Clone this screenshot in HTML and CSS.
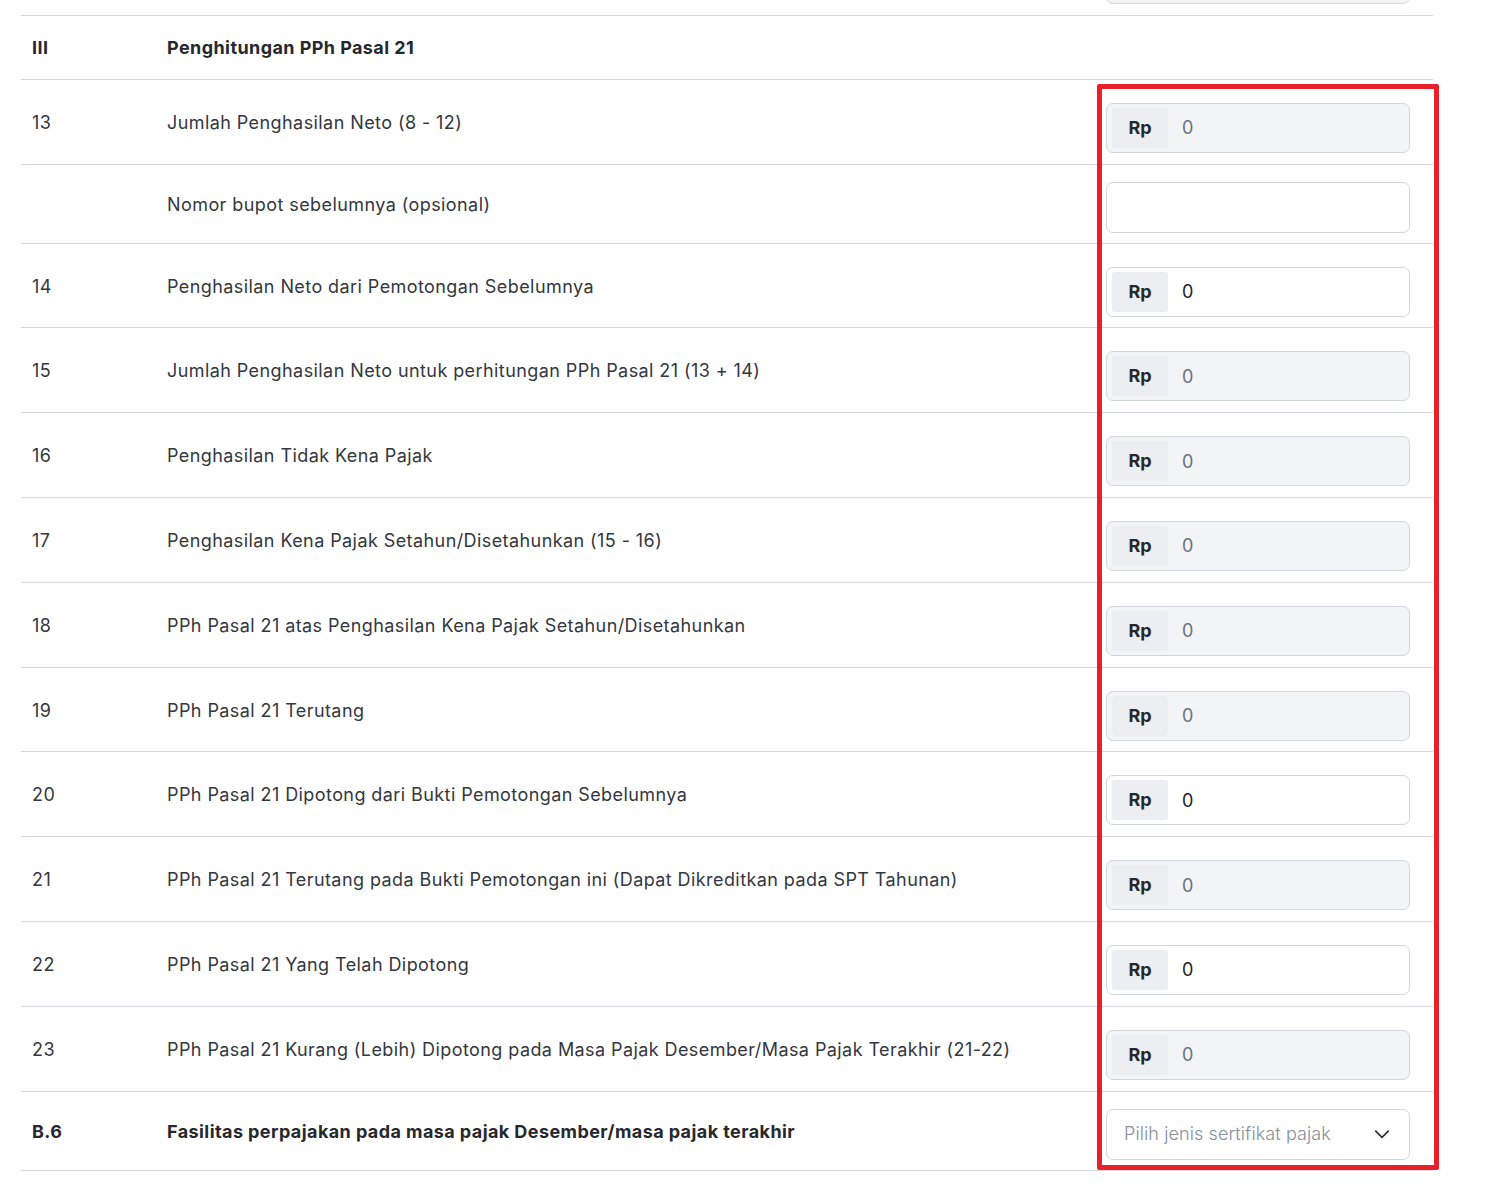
FILE: index.html
```html
<!DOCTYPE html>
<html lang="id">
<head>
    <meta charset="UTF-8">
    <title>Penghitungan PPh Pasal 21</title>
    <link rel="stylesheet" href="styles.css">
</head>
<body>
    <div class="page">
        <div class="table">

            <div class="row money">
                <div class="cell num"></div>
                <div class="cell label"></div>
                <div class="cell field">
                    <div class="money-input readonly"><span class="addon">Rp</span><input type="text" value="0" readonly></div>
                </div>
            </div>

            <div class="row section">
                <div class="cell num">III</div>
                <div class="cell label">Penghitungan PPh Pasal 21</div>
                <div class="cell field"></div>
            </div>

            <div class="row money">
                <div class="cell num">13</div>
                <div class="cell label">Jumlah Penghasilan Neto (8 - 12)</div>
                <div class="cell field">
                    <div class="money-input readonly"><span class="addon">Rp</span><input type="text" value="0" readonly></div>
                </div>
            </div>

            <div class="row plain">
                <div class="cell num"></div>
                <div class="cell label">Nomor bupot sebelumnya (opsional)</div>
                <div class="cell field">
                    <input class="text-input" type="text">
                </div>
            </div>

            <div class="row money">
                <div class="cell num">14</div>
                <div class="cell label">Penghasilan Neto dari Pemotongan Sebelumnya</div>
                <div class="cell field">
                    <div class="money-input"><span class="addon">Rp</span><input type="text" value="0"></div>
                </div>
            </div>

            <div class="row money">
                <div class="cell num">15</div>
                <div class="cell label">Jumlah Penghasilan Neto untuk perhitungan PPh Pasal 21 (13 + 14)</div>
                <div class="cell field">
                    <div class="money-input readonly"><span class="addon">Rp</span><input type="text" value="0" readonly></div>
                </div>
            </div>

            <div class="row money">
                <div class="cell num">16</div>
                <div class="cell label">Penghasilan Tidak Kena Pajak</div>
                <div class="cell field">
                    <div class="money-input readonly"><span class="addon">Rp</span><input type="text" value="0" readonly></div>
                </div>
            </div>

            <div class="row money">
                <div class="cell num">17</div>
                <div class="cell label">Penghasilan Kena Pajak Setahun/Disetahunkan (15 - 16)</div>
                <div class="cell field">
                    <div class="money-input readonly"><span class="addon">Rp</span><input type="text" value="0" readonly></div>
                </div>
            </div>

            <div class="row money">
                <div class="cell num">18</div>
                <div class="cell label">PPh Pasal 21 atas Penghasilan Kena Pajak Setahun/Disetahunkan</div>
                <div class="cell field">
                    <div class="money-input readonly"><span class="addon">Rp</span><input type="text" value="0" readonly></div>
                </div>
            </div>

            <div class="row money">
                <div class="cell num">19</div>
                <div class="cell label">PPh Pasal 21 Terutang</div>
                <div class="cell field">
                    <div class="money-input readonly"><span class="addon">Rp</span><input type="text" value="0" readonly></div>
                </div>
            </div>

            <div class="row money">
                <div class="cell num">20</div>
                <div class="cell label">PPh Pasal 21 Dipotong dari Bukti Pemotongan Sebelumnya</div>
                <div class="cell field">
                    <div class="money-input"><span class="addon">Rp</span><input type="text" value="0"></div>
                </div>
            </div>

            <div class="row money">
                <div class="cell num">21</div>
                <div class="cell label">PPh Pasal 21 Terutang pada Bukti Pemotongan ini (Dapat Dikreditkan pada SPT Tahunan)</div>
                <div class="cell field">
                    <div class="money-input readonly"><span class="addon">Rp</span><input type="text" value="0" readonly></div>
                </div>
            </div>

            <div class="row money">
                <div class="cell num">22</div>
                <div class="cell label">PPh Pasal 21 Yang Telah Dipotong</div>
                <div class="cell field">
                    <div class="money-input"><span class="addon">Rp</span><input type="text" value="0"></div>
                </div>
            </div>

            <div class="row money">
                <div class="cell num">23</div>
                <div class="cell label">PPh Pasal 21 Kurang (Lebih) Dipotong pada Masa Pajak Desember/Masa Pajak Terakhir (21-22)</div>
                <div class="cell field">
                    <div class="money-input readonly"><span class="addon">Rp</span><input type="text" value="0" readonly></div>
                </div>
            </div>

            <div class="row plain bold">
                <div class="cell num">B.6</div>
                <div class="cell label">Fasilitas perpajakan pada masa pajak Desember/masa pajak terakhir</div>
                <div class="cell field">
                    <div class="select">
                        <span class="placeholder">Pilih jenis sertifikat pajak</span>
                        <svg width="20" height="20" viewBox="0 0 24 24" fill="none" stroke="#2b2d31" stroke-width="2" stroke-linecap="round" stroke-linejoin="round"><path d="M4.5 8.5l7.5 7.5 7.5-7.5"/></svg>
                    </div>
                </div>
            </div>

        </div>

        <div class="highlight"></div>
    </div>
</body>
</html>
```

FILE: styles.css
```css
* {
    box-sizing: border-box;
}
html, body {
    height: 100%;
}
body {
    margin: 0;
    background-color: #fff;
    color: #333740;
    font-family: 'Inter', 'Noto Sans', sans-serif;
    font-size: 18px;
    letter-spacing: 0.42px;
    overflow: hidden;
}
.page {
    position: relative;
    display: flow-root;
}
.table {
    margin: -69px 0 0 21px;
    width: 1412px;
}
.row {
    display: grid;
    grid-template-columns: 146px 1fr 327px;
    border-bottom: 1px solid #d6d8df;
}
.cell {
    line-height: 24px;
}
.num {
    padding-left: 11px;
}
.label {
    padding-right: 20px;
}
.field {
    padding-right: 23px;
}
.row.money .num,
.row.money .label {
    padding-top: 31px;
}
.row.money .field {
    padding-top: 23px;
    padding-bottom: 10.8px;
}
.row.plain .num,
.row.plain .label {
    padding-top: 28px;
}
.row.plain .field {
    padding-top: 17px;
    padding-bottom: 10px;
}
.row.section .num,
.row.section .label {
    padding-top: 20px;
    padding-bottom: 19px;
}
.row.section,
.row.bold {
    font-weight: 700;
    color: #26282d;
}
.money-input {
    display: flex;
    align-items: center;
    height: 50px;
    padding: 0 5px;
    border: 1px solid #d3d6dc;
    border-radius: 7px;
    background-color: #fff;
}
.money-input.readonly {
    background-color: #f3f4f6;
}
.addon {
    width: 56px;
    height: 40px;
    line-height: 40px;
    text-align: center;
    background-color: #eceef1;
    border-radius: 3px;
    font-weight: 700;
    letter-spacing: 0;
    color: #26282d;
}
.money-input input {
    flex: 1;
    min-width: 0;
    border: none;
    background: transparent;
    font-family: inherit;
    font-size: 18px;
    padding: 0 0 0 14px;
    color: #222;
    outline: none;
}
.money-input.readonly input {
    color: #6b7280;
}
.text-input {
    width: 100%;
    height: 51px;
    border: 1px solid #d3d6dc;
    border-radius: 7px;
    background-color: #fff;
}
.select {
    display: flex;
    align-items: center;
    justify-content: space-between;
    height: 51px;
    padding: 0 17px 0 17px;
    border: 1px solid #d3d6dc;
    border-radius: 7px;
    background-color: #fff;
}
.placeholder {
    color: #878d98;
    font-weight: 300;
    letter-spacing: 0.1px;
}
.highlight {
    position: absolute;
    left: 1097px;
    top: 84px;
    width: 342px;
    height: 1086px;
    border: 5px solid #e8202a;
    border-radius: 2px;
}
```
